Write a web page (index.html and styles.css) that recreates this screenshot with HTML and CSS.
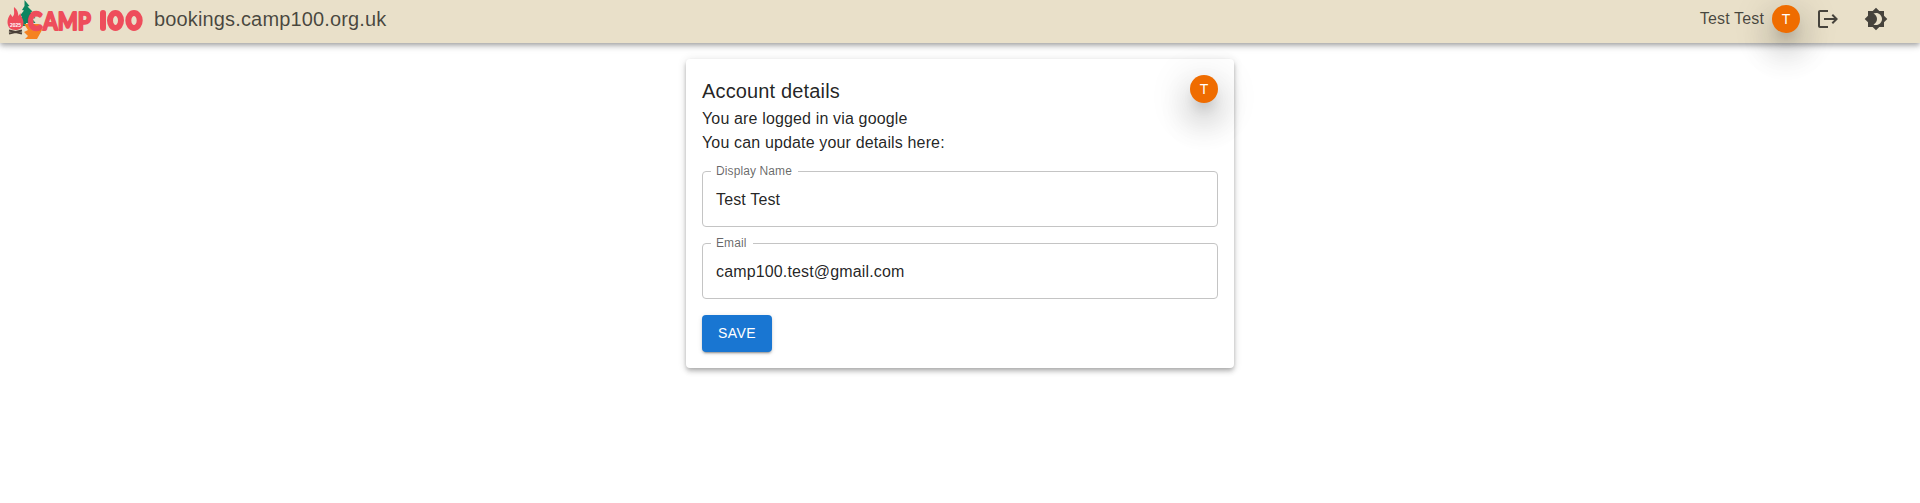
FILE: index.html
```html
<!DOCTYPE html>
<html lang="en">
<head>
<meta charset="utf-8">
<title>Account details</title>
<link rel="stylesheet" href="styles.css">
</head>
<body>
<header class="app-bar">
  <svg class="logo" width="150" height="43" viewBox="0 0 150 43" role="img" aria-label="Camp 100">
    <path d="M24.500 0l5 6-2 .5 5 5-2 .8 5 5.700-3 1 3 4H26v3h-4v-3l-3-2 3-5-2-.5 4-5-2-.5 2.500-4z" fill="#0d8560"/>
    <path d="M24 24h15l3 6-5 9H25l3-3-4-4 4-2z" fill="#f58220"/>
    <path d="M14 7c4 3 4 6 4.500 9l2-3c0 4 3 5 3 10 0 5-4 7-8 7-5 0-8-3-8-8 0-3 1-5 3-8l2 3c3-3 1-6 1.500-10z" fill="#ee4d5b"/>
    <path d="M9 30.500l13 3M22 30.500l-13 3" stroke="#4a4038" stroke-width="1.800"/>
    <text class="logo-year" x="10" y="26.500" textLength="11">2025</text>
    <text class="logo-c" x="28" y="30" textLength="14" lengthAdjust="spacingAndGlyphs">C</text>
    <text class="logo-word" x="43" y="30" textLength="48" lengthAdjust="spacingAndGlyphs">AMP</text>
    <path d="M103 13v15" class="logo-stroke"/>
    <ellipse cx="115.500" cy="20.500" rx="5.500" ry="7.500" class="logo-stroke"/>
    <ellipse cx="134" cy="20.500" rx="5.700" ry="7.500" class="logo-stroke"/>
  </svg>
  <div class="site">bookings.camp100.org.uk</div>
  <div class="user">Test Test</div>
  <div class="avatar">T</div>
  <button class="icon-button" aria-label="Log out"><svg viewBox="0 0 24 24"><path d="m17 7-1.410 1.410L18.170 11H8v2h10.170l-2.580 2.580L17 17l5-5zM4 5h8V3H4c-1.100 0-2 .9-2 2v14c0 1.100.9 2 2 2h8v-2H4V5z"/></svg></button>
  <button class="icon-button" aria-label="Toggle theme"><svg viewBox="0 0 24 24"><path d="M20 8.690V4h-4.690L12 .69 8.690 4H4v4.690L.69 12 4 15.310V20h4.690L12 23.310 15.310 20H20v-4.690L23.310 12 20 8.690zM12 18c-.89 0-1.740-.2-2.500-.55C11.560 16.500 13 14.420 13 12s-1.440-4.500-3.500-5.450C10.260 6.200 11.110 6 12 6c3.310 0 6 2.690 6 6s-2.690 6-6 6z"/></svg></button>
</header>
<main class="card">
  <div class="card-head">
    <div>
      <h1 class="title">Account details</h1>
      <p class="line">You are logged in via google</p>
      <p class="line">You can update your details here:</p>
    </div>
    <div class="avatar">T</div>
  </div>
  <div class="field"><label class="label">Display Name</label>Test Test</div>
  <div class="field"><label class="label">Email</label>camp100.test@gmail.com</div>
  <button class="save">SAVE</button>
</main>
</body>
</html>
```
FILE: styles.css
```css
* { box-sizing: border-box; }
body { min-height: 100vh; margin: 0; background: #fff; color: rgba(0,0,0,.87); font: 16px/24px "Liberation Sans", Arial, sans-serif; }
.app-bar { position: relative; z-index: 1; display: flex; align-items: center; height: 43px; padding: 0 24px 5px 0; background: #e9e0c9; color: rgba(0,0,0,.7); box-shadow: 0 2px 4px -1px rgba(0,0,0,.2), 0 4px 5px 0 rgba(0,0,0,.14), 0 1px 10px 0 rgba(0,0,0,.12); }
.logo { display: block; flex: none; align-self: flex-start; }
.logo-year { font: bold 5px "Liberation Sans", sans-serif; fill: #fff; }
.logo-c { font: 900 25px Lato, sans-serif; fill: #ee4d5b; stroke: #ee4d5b; stroke-width: 2.5; stroke-linejoin: round; }
.logo-word { font: 900 25px Lato, sans-serif; fill: #ee4d5b; stroke: #ee4d5b; stroke-width: 1.8; stroke-linejoin: round; }
.logo-stroke { fill: none; stroke: #ee4d5b; stroke-width: 6; stroke-linecap: round; }
.site { margin-left: 4px; font-size: 20px; letter-spacing: .15px; flex: 1; }
.user { margin-right: 8px; letter-spacing: .15px; }
.avatar { display: flex; align-items: center; justify-content: center; width: 28px; height: 28px; flex: none; border-radius: 50%; background: #ef6c00; color: #fff; font-size: 14px; line-height: 1; box-shadow: 0 10px 13px -6px rgba(0,0,0,.2), 0 20px 31px 3px rgba(0,0,0,.14), 0 8px 38px 7px rgba(0,0,0,.12); }
.icon-button { width: 40px; height: 40px; margin-left: 8px; padding: 8px; border: 0; background: none; }
.icon-button svg { display: block; width: 24px; height: 24px; fill: #46433c; }
.card { width: 548px; height: 309px; margin: 16px auto 0; padding: 16px; border-radius: 4px; background: #fff; box-shadow: 0 2px 4px -1px rgba(0,0,0,.2), 0 4px 5px 0 rgba(0,0,0,.14), 0 1px 10px 0 rgba(0,0,0,.12); }
.card-head { display: flex; justify-content: space-between; letter-spacing: .15px; }
.title { margin: 0; font-size: 20px; line-height: 32px; font-weight: 400; }
.line { margin: 0; }
.field { position: relative; height: 56px; margin-top: 16px; padding: 16px 13px; border: 1px solid #c4c4c4; border-radius: 4px; letter-spacing: .15px; }
.label { position: absolute; left: 8px; top: -8px; padding: 0 6px 0 5px; background: #fff; color: rgba(0,0,0,.6); font-size: 12px; line-height: 14px; letter-spacing: .11px; }
.save { display: block; height: 37px; margin-top: 16px; padding: 5px 16px 7px; border: 0; border-radius: 4px; background: #1976d2; color: #fff; font: 14px/24px "Liberation Sans", Arial, sans-serif; letter-spacing: .4px; box-shadow: 0 3px 1px -2px rgba(0,0,0,.2), 0 2px 2px 0 rgba(0,0,0,.14), 0 1px 5px 0 rgba(0,0,0,.12); }
```
